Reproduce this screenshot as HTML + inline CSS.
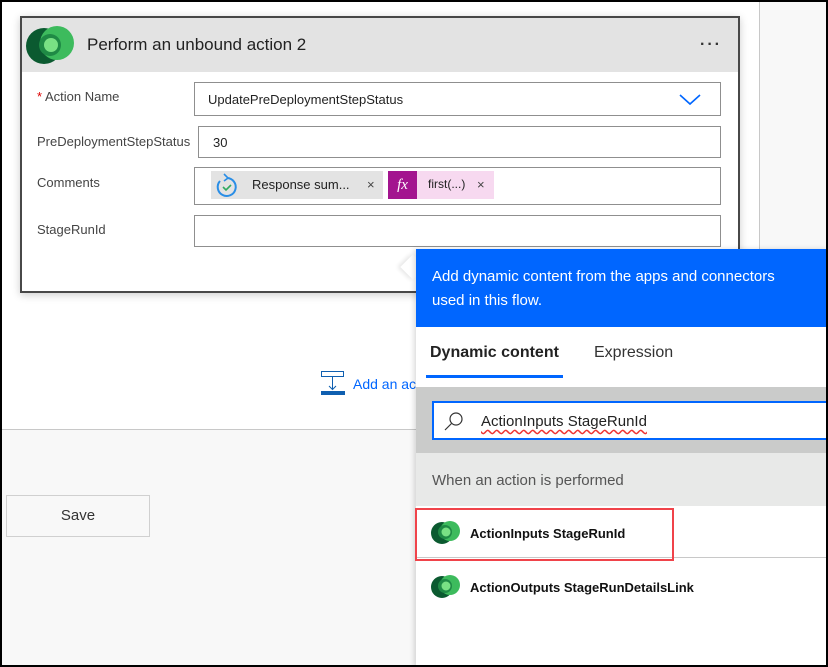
<!DOCTYPE html><html><head><style>
*{margin:0;padding:0;box-sizing:border-box}
body{width:828px;height:667px;position:relative;overflow:hidden;font-family:"Liberation Sans",sans-serif;background:#fff}
.a{position:absolute}
.box{position:absolute;border:1px solid #8f8f8f;background:#fff}
.lbl{position:absolute;font-size:13px;color:#444}
</style></head><body>
<div class="a" style="left:0;top:0;width:828px;height:667px;border:2px solid #000;z-index:20;pointer-events:none"></div>
<div class="a" style="left:759px;top:0;width:69px;height:667px;background:#f8f8f8;border-left:1px solid #c8c8c8"></div>
<div class="a" style="left:0;top:429px;width:760px;height:238px;background:#f8f8f8;border-top:1px solid #c8c8c8"></div>
<div class="a" style="left:6px;top:495px;width:144px;height:42px;border:1px solid #d0d0d0;font-size:15px;color:#333;text-align:center;line-height:40px">Save</div>
<svg class="a" style="left:320px;top:370px" width="26" height="26"><rect x="1.5" y="1.5" width="22" height="5" fill="#fff" stroke="#0f5fb0"/><line x1="12.5" y1="6" x2="12.5" y2="19" stroke="#0f5fb0"/><path d="M9 16l3.5 3.5L16 16" fill="none" stroke="#0f5fb0"/><rect x="1" y="21" width="24" height="4" fill="#0f5fb0"/></svg>
<div class="a" style="left:353px;top:376px;font-size:14px;color:#0066ff">Add an action</div>
<!-- card -->
<div class="a" style="left:20px;top:16px;width:720px;height:277px;border:2px solid #484848;background:#fff;box-shadow:0 2px 8px rgba(0,0,0,.2)">
<div class="a" style="left:0;top:0;width:716px;height:54px;background:#e3e3e3"></div>
<svg class="a" style="left:2px;top:6px" width="52" height="42"><ellipse cx="20" cy="22" rx="18" ry="18" fill="#0b5a30"/><ellipse cx="33" cy="19" rx="17" ry="17" fill="#3dbb5d"/><circle cx="26" cy="21" r="11" fill="#1f8a45"/><circle cx="27" cy="21" r="7" fill="#79e184"/></svg>
<div class="a" style="left:65px;top:17px;font-size:17px;color:#222">Perform an unbound action 2</div>
<div class="a" style="left:678px;top:18px;font-size:16px;color:#333;letter-spacing:2px;font-weight:bold">···</div>
</div>
<div class="lbl" style="left:37px;top:89px"><span style="color:#d00">*</span> Action Name</div>
<div class="box" style="left:194px;top:82px;width:527px;height:34px"><span class="a" style="left:13px;top:9px;font-size:13px;color:#222">UpdatePreDeploymentStepStatus</span>
<svg class="a" style="left:484px;top:11px" width="22" height="12"><path d="M1 1l10 9 10-9" fill="none" stroke="#0066ff" stroke-width="1.6"/></svg></div>
<div class="lbl" style="left:37px;top:134px">PreDeploymentStepStatus</div>
<div class="box" style="left:198px;top:126px;width:523px;height:32px"><span class="a" style="left:14px;top:8px;font-size:13px;color:#222">30</span></div>
<div class="lbl" style="left:37px;top:175px">Comments</div>
<div class="box" style="left:194px;top:167px;width:527px;height:38px">
<div class="a" style="left:16px;top:3px;width:172px;height:28px;background:#e3e3e3"><svg class="a" style="left:3px;top:2px" width="26" height="26"><path d="M6 8a9 9 0 1 0 7-3" fill="none" stroke="#2a8ee6" stroke-width="2"/><path d="M10 1l4 4-4 3" fill="none" stroke="#2a8ee6" stroke-width="1.6"/><path d="M9 14l3 3 5-5" fill="none" stroke="#2faa60" stroke-width="1.6"/></svg><span class="a" style="left:41px;top:6px;font-size:13px;color:#222">Response sum...</span><span class="a" style="left:156px;top:6px;font-size:13px;color:#444">×</span></div>
<div class="a" style="left:193px;top:3px;width:29px;height:28px;background:#a3148f;color:#fff;font-family:'Liberation Serif',serif;font-style:italic;font-size:15px;text-align:center;line-height:28px">fx</div>
<div class="a" style="left:222px;top:3px;width:77px;height:28px;background:#f7d9f0"><span class="a" style="left:11px;top:6px;font-size:12px;color:#222">first(...)</span><span class="a" style="left:60px;top:6px;font-size:13px;color:#444">×</span></div>
</div>
<div class="lbl" style="left:37px;top:222px">StageRunId</div>
<div class="box" style="left:194px;top:215px;width:527px;height:32px"></div>
<!-- panel -->
<div class="a" style="left:404px;top:258px;width:18px;height:18px;background:#fff;transform:rotate(45deg);box-shadow:-2px 2px 4px rgba(0,0,0,.1)"></div>
<div class="a" style="left:416px;top:249px;width:412px;height:418px;background:#fff;box-shadow:-2px 0 5px rgba(0,0,0,.15)">
<div class="a" style="left:0;top:0;width:412px;height:78px;background:#0066ff;color:#fff;font-size:15px;line-height:24px;padding:16px 0 0 16px">Add dynamic content from the apps and connectors<br>used in this flow.</div>
<div class="a" style="left:14px;top:95px;font-size:16px;font-weight:bold;color:#222">Dynamic content</div>
<div class="a" style="left:10px;top:126px;width:137px;height:3px;background:#0066ff"></div>
<div class="a" style="left:178px;top:95px;font-size:16px;color:#333">Expression</div>
<div class="a" style="left:0;top:138px;width:412px;height:66px;background:#cacbca"></div>
<div class="a" style="left:16px;top:152px;width:400px;height:39px;background:#fff;border:2px solid #0066ff"></div>
<svg class="a" style="left:28px;top:162px" width="20" height="20"><circle cx="12" cy="8" r="6" fill="none" stroke="#333" stroke-width="1.2"/><line x1="7.5" y1="12.5" x2="1" y2="19" stroke="#333" stroke-width="1.2"/></svg>
<div class="a" style="left:65px;top:164px;font-size:15px;color:#222;text-decoration:underline wavy #e33;text-underline-offset:3px">ActionInputs StageRunId</div>
<div class="a" style="left:0;top:204px;width:412px;height:53px;background:#e8e9e8"></div>
<div class="a" style="left:16px;top:223px;font-size:15px;color:#555">When an action is performed</div>
<div class="a" style="left:0;top:308px;width:412px;height:1px;background:#c8c8c8"></div>
<div class="a" style="left:-1px;top:259px;width:259px;height:53px;border:2px solid #f0434a"></div>
<svg class="a" style="left:14px;top:270px" width="32" height="28"><ellipse cx="12" cy="14" rx="11" ry="11" fill="#0b5a30"/><ellipse cx="20" cy="12" rx="10" ry="10" fill="#3dbb5d"/><circle cx="15" cy="13" r="7" fill="#1f8a45"/><circle cx="16" cy="13" r="4.5" fill="#79e184"/></svg>
<div class="a" style="left:54px;top:277px;font-size:13px;font-weight:bold;color:#111">ActionInputs StageRunId</div>
<svg class="a" style="left:14px;top:324px" width="32" height="28"><ellipse cx="12" cy="14" rx="11" ry="11" fill="#0b5a30"/><ellipse cx="20" cy="12" rx="10" ry="10" fill="#3dbb5d"/><circle cx="15" cy="13" r="7" fill="#1f8a45"/><circle cx="16" cy="13" r="4.5" fill="#79e184"/></svg>
<div class="a" style="left:54px;top:331px;font-size:13px;font-weight:bold;color:#111">ActionOutputs StageRunDetailsLink</div>
</div>
</body></html>
